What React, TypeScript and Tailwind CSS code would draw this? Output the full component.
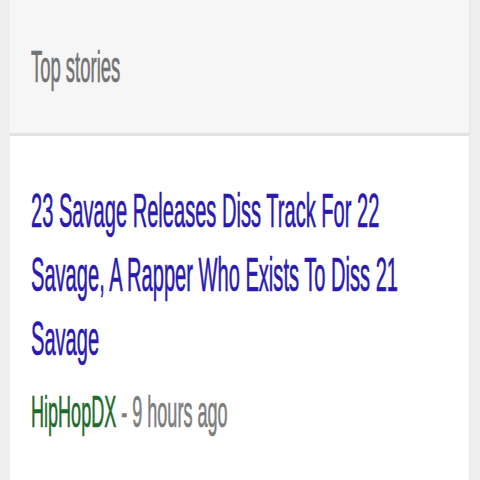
export default function App() {
  return (
    <div className="w-[480px] h-[480px] overflow-hidden bg-[#eeeeee] px-[10px] font-['Liberation_Sans',Arial,sans-serif]">
      <div className="h-full w-full overflow-hidden bg-white border-r border-[#e6e6e6]">
        <div className="h-[136px] bg-[#f6f6f6] border-b-[3px] border-[#e2e2e2] pt-[44px] pl-[21px]">
          <div className="origin-left scale-x-[0.41] w-[600px] text-[45px] leading-[45px] text-[#737373] whitespace-nowrap [-webkit-text-stroke-width:0.7px]">
            Top stories
          </div>
        </div>
        <div className="pt-[42px] pl-[21px]">
          <div className="origin-left scale-x-[0.41] w-[950px] text-[49px] leading-[64px] text-[#2a1ab0] [-webkit-text-stroke-width:0.7px]">
            23 Savage Releases Diss Track For 22 Savage, A Rapper Who Exists To Diss 21 Savage
          </div>
          <div className="origin-left scale-x-[0.41] w-[950px] mt-[20px] text-[44px] leading-[44px] whitespace-nowrap [-webkit-text-stroke-width:0.7px]">
            <span className="text-[#1e6b2e]">HipHopDX</span>
            <span className="text-[#7d7d7d]"> - 9 hours ago</span>
          </div>
        </div>
      </div>
    </div>
  );
}
